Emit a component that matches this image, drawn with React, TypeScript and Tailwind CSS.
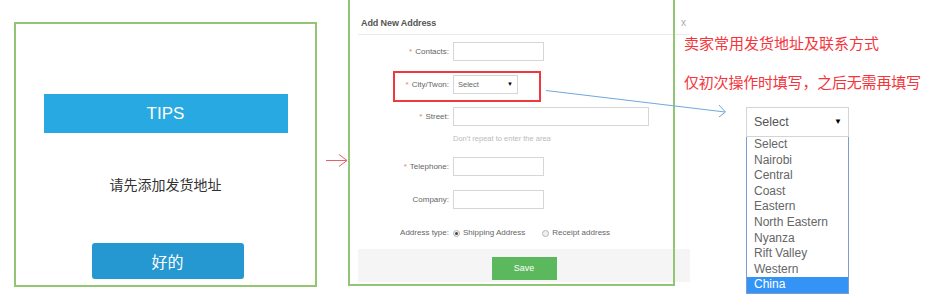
import React from "react";

const sans = { fontFamily: '"Liberation Sans", Arial, "Noto Sans CJK SC", sans-serif' };

function FormRow({ label, required, children }: { label: string; required?: boolean; children: React.ReactNode }) {
  return (
    <div className="flex items-center">
      <div className="w-[95px] pr-[4px] text-right text-[8px] text-[#666] leading-none whitespace-nowrap">
        {required && <span className="text-[#e58080] mr-[3px]">*</span>}
        {label}
      </div>
      {children}
    </div>
  );
}

function Radio({ checked }: { checked?: boolean }) {
  return (
    <span className="inline-flex w-[7px] h-[7px] rounded-full border border-[#b5b5b5] bg-[#f0f0f0] items-center justify-center mr-[3px]">
      {checked && <span className="w-[3px] h-[3px] rounded-full bg-[#444]" />}
    </span>
  );
}

export default function App() {
  const items = ["Select", "Nairobi", "Central", "Coast", "Eastern", "North Eastern", "Nyanza", "Rift Valley", "Western", "China"];
  return (
    <div className="relative w-[948px] h-[306px] bg-white overflow-hidden flex items-start" style={sans}>
      {/* Left: TIPS panel */}
      <div className="mt-[22px] ml-[14px] w-[303px] h-[265px] border-2 border-[#94c575] flex flex-col items-center shrink-0">
        <div className="mt-[70px] w-[244px] h-[39px] bg-[#29a9e1] text-white text-[17px] flex items-center justify-center">
          TIPS
        </div>
        <div className="mt-[41px] h-[20px] text-[14px] leading-[20px] text-[#333]" style={{ fontFamily: '"Noto Sans CJK SC", sans-serif' }}>
          请先添加发货地址
        </div>
        <div
          className="mt-[49px] ml-[4px] w-[152px] h-[36px] rounded-[3px] bg-[#2598d1] text-white text-[16px] flex items-center justify-center"
          style={{ fontFamily: '"Noto Sans CJK SC", sans-serif' }}
        >
          好的
        </div>
      </div>

      {/* Middle: Add New Address modal */}
      <div className="relative ml-[31px] w-[327px] h-[286px] shrink-0">
        <div className="ml-[10px] w-[332px] flex flex-col">
          <div className="h-[35px] border-b border-[#ebebeb] flex items-end pb-[5px] pl-[3px] text-[9px] leading-[12px] font-bold text-[#555] tracking-[-0.1px]">
            Add New Address
          </div>
          <div className="mt-[7px]">
            <FormRow label="Contacts:" required>
              <div className="w-[91px] h-[19px] border border-[#d6d6d6] bg-white" />
            </FormRow>
          </div>
          <div className="mt-[14px]">
            <FormRow label="City/Twon:" required>
              <div className="w-[65px] h-[19px] border border-[#d6d6d6] bg-white flex items-center justify-between px-[4px] text-[7.5px] text-[#666]">
                <span>Select</span>
                <span className="text-[6px] text-black">▼</span>
              </div>
            </FormRow>
          </div>
          <div className="mt-[13px]">
            <FormRow label="Street:" required>
              <div className="w-[196px] h-[19px] border border-[#d6d6d6] bg-white" />
            </FormRow>
          </div>
          <div className="mt-[7px] h-[12px] pl-[95px] text-[7.5px] leading-[12px] text-[#bbb] whitespace-nowrap">
            Don't repeat to enter the area
          </div>
          <div className="mt-[12px]">
            <FormRow label="Telephone:" required>
              <div className="w-[91px] h-[19px] border border-[#d6d6d6] bg-white" />
            </FormRow>
          </div>
          <div className="mt-[14px]">
            <FormRow label="Company:">
              <div className="w-[91px] h-[19px] border border-[#d6d6d6] bg-white" />
            </FormRow>
          </div>
          <div className="mt-[18px] h-[12px]">
            <FormRow label="Address type:">
              <div className="flex items-center text-[8px] text-[#666] whitespace-nowrap">
                <Radio checked />
                <span>Shipping Address</span>
                <span className="w-[17px]" />
                <Radio />
                <span>Receipt address</span>
              </div>
            </FormRow>
          </div>
          <div className="mt-[10px] h-[33px] bg-[#f5f5f5] flex justify-center pt-[8px]">
            <div className="w-[65px] h-[23px] bg-[#5cb85c] text-white text-[9px] flex items-center justify-center">
              Save
            </div>
          </div>
        </div>
        {/* green frame overlay */}
        <div className="absolute inset-0 border-x-2 border-b-2 border-[#94c575] pointer-events-none" />
        {/* red highlight box */}
        <div className="absolute left-[45px] top-[71px] w-[148px] h-[31px] border-2 border-[#ec3a40] pointer-events-none" />
      </div>

      {/* Right: annotations and dropdown */}
      <div className="ml-[9px] pt-[33px] flex flex-col shrink-0" style={{ fontFamily: '"Noto Sans CJK SC", sans-serif' }}>
        <div className="text-[15px] leading-[20px] text-[#f5343c] whitespace-nowrap">卖家常用发货地址及联系方式</div>
        <div className="mt-[19px] text-[15px] leading-[20px] text-[#f5343c] whitespace-nowrap tracking-[-0.2px]">仅初次操作时填写，之后无需再填写</div>
        <div className="mt-[15px] ml-[62px] w-[103px] flex flex-col" style={{ fontFamily: '"Liberation Sans", Tahoma, sans-serif' }}>
          <div className="h-[30px] border border-[#d4d4d4] flex items-center justify-between pl-[7px] pr-[6px] text-[12.5px] text-[#555]">
            <span>Select</span>
            <span className="text-[8px] text-black">▼</span>
          </div>
          <div className="border border-t-0 border-[#7f9ccc] flex flex-col">
            {items.map((it) => (
              <div
                key={it}
                className={
                  it === "China"
                    ? "h-[15.6px] leading-[15.6px] pl-[7px] text-[12px] bg-[#3394f5] text-white"
                    : "h-[15.6px] leading-[15.6px] pl-[7px] text-[12px] text-[#666]"
                }
              >
                {it}
              </div>
            ))}
          </div>
        </div>
      </div>

      {/* close mark */}
      <div className="absolute left-[681px] top-[15px] text-[10px] text-[#aaa]">x</div>

      {/* arrows */}
      <svg className="absolute inset-0 pointer-events-none" width="948" height="306">
        <g stroke="#e8606a" strokeWidth="1" fill="none">
          <line x1="326" y1="160.5" x2="347" y2="160.5" />
          <polyline points="339,154.5 347,160.5 339,166.5" />
        </g>
        <g stroke="#70a8dc" strokeWidth="1" fill="none">
          <line x1="546" y1="90.5" x2="725" y2="112" />
          <polyline points="719,105 725.5,112 719,117" />
        </g>
      </svg>
    </div>
  );
}
